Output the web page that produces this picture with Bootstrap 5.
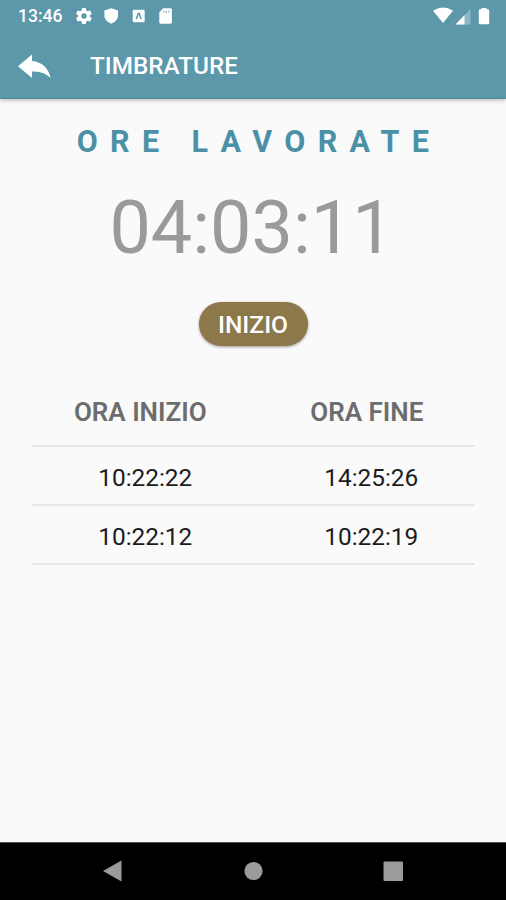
<!DOCTYPE html>
<html lang="it">
<head>
<meta charset="utf-8">
<meta name="viewport" content="width=device-width, initial-scale=1">
<title>Timbrature</title>
<link href="https://cdn.jsdelivr.net/npm/bootstrap@5.3.0/dist/css/bootstrap.min.css" rel="stylesheet">
<style>
body{font-family:Roboto,"Liberation Sans",sans-serif;background:#fafafa;height:900px;overflow:hidden}
svg{display:block;flex:none}
.top-area{background:#5c97aa;height:99px;border-bottom:1px solid #4a8ba0;box-shadow:0 1px 5px rgba(0,0,0,.28)}
.status-bar{height:31px;padding:0 15px 0 18px;font-size:17.5px;font-weight:500;line-height:29px}
.clock{width:58px;padding-top:2px}
.app-bar{height:70px;padding-left:18px}
.app-title{font-size:24.3px;font-weight:500;line-height:70px;margin:0 0 0 39px}
.worked{color:#4a90a6;font-size:30.5px;font-weight:700;letter-spacing:12.35px;line-height:42px;margin:22px 0 0;white-space:nowrap;padding-left:12px}
.timer{color:#9a9a9a;font-size:73.7px;line-height:80px;margin-top:25px;padding-right:3px}
.btn-start{--bs-btn-color:#fff;--bs-btn-bg:#8c784b;--bs-btn-border-width:0;--bs-btn-hover-bg:#7d6a40;--bs-btn-hover-color:#fff;width:109px;height:44px;margin-top:34px;padding:0;font-size:24.6px;font-weight:500;line-height:46px;box-shadow:0 1px 3px rgba(0,0,0,.4)}
.stamps{margin:31px 31px 0 32px;width:auto}
.stamps .row{border-bottom:2px solid #e6e6e6;height:59px;line-height:61px;font-size:24.4px;color:#1c1c1c}
.stamps .row>div{padding:0 0 0 5px}
.stamps .row>div+div{padding:0 0 0 14px}
.stamps .row.heads{height:70px;line-height:71px;font-weight:600;color:#6d6d6d}
.stamps .row.heads>div{padding:0 5px 0 0;font-size:26px}
.stamps .row.heads>div+div{padding:0 0 0 5px}
.nav-keys{height:58px;background:#000;border-top:1px solid #555;padding-bottom:1px}
</style>
</head>
<body class="d-flex flex-column">
<header class="top-area text-white flex-shrink-0">
  <div class="status-bar d-flex align-items-center">
    <span class="clock">13:46</span>
    <svg width="16" height="16" viewBox="2 2 20 20" fill="#fff"><path d="M19.4 13a7.5 7.5 0 0 0 0-2l2.1-1.600a.5.5 0 0 0 .1-.7l-2-3.400a.5.5 0 0 0-.6-.2l-2.500 1a7.300 7.300 0 0 0-1.700-1l-.4-2.600a.5.5 0 0 0-.5-.5h-4a.5.5 0 0 0-.5.5L9 5.100a7.700 7.700 0 0 0-1.700 1l-2.500-1a.5.5 0 0 0-.6.2l-2 3.400a.5.5 0 0 0 .1.7L4.500 11a7.500 7.500 0 0 0 0 2l-2.200 1.600a.5.5 0 0 0-.1.700l2 3.400c.1.200.400.300.600.200l2.500-1a7.300 7.300 0 0 0 1.700 1l.4 2.600c0 .300.200.500.500.500h4c.300 0 .500-.200.500-.500l.4-2.600a7.700 7.700 0 0 0 1.700-1l2.500 1c.200.100.500 0 .600-.200l2-3.400a.5.5 0 0 0-.1-.700zM12 15.400a3.400 3.400 0 1 1 0-6.800 3.400 3.400 0 0 1 0 6.800z"/></svg>
    <svg class="ms-2" width="24" height="16" viewBox="0 0 24 16" fill="#fff"><path d="M11.200.2 18 2.600V7.500c0 3.800-2.900 6.800-6.800 8.200C7.300 14.300 4.400 11.300 4.400 7.500V2.600z"/></svg>
    <svg class="ms-2" width="14" height="14" viewBox="0 0 14 14"><rect x=".7" y=".7" width="12" height="12.500" rx="1.200" fill="#fff"/><path d="M4.300 10 6.300 4.200h.8L9.100 10" fill="none" stroke="#5c97aa" stroke-width="1.500"/></svg>
    <svg class="ms-2" width="24" height="16" viewBox="-6 0 24 16"><path d="M4.500.3H12q1.400 0 1.400 1.400v12.600q0 1.400-1.400 1.400H2.200Q.8 15.700.8 14.300V4.500z" fill="#fff" transform="translate(-1.500)"/><path d="M3.900 2.500v2.500M6.400 2.500v2.500M8.900 2.500v2.500" stroke="#9fc2cd" stroke-width="1.200"/></svg>
    <svg class="ms-auto" width="58" height="18" viewBox="433 6 58 18"><path d="M433 9.800Q443 3.400 453 9.800L443 22z" fill="#fff"/><path d="M470.500 8v15.500h-15z" fill="#8db7c4"/><path d="M464.500 14v9.500h-9z" fill="#fff"/><path d="M481.500 7h5v1.300h1.500q1.200 0 1.200 1.200v12.600q0 1.200-1.200 1.200h-8q-1.200 0-1.200-1.200V9.500q0-1.200 1.200-1.200h1.500z" fill="#fff"/></svg>
  </div>
  <div class="app-bar d-flex align-items-center">
    <svg width="33" height="25" viewBox="0 0 33 25" fill="#fff"><path d="M14 .5V7Q29 8.500 32.700 24 25.500 16.500 14 17.500V24L0 12.200z"/></svg>
    <h1 class="app-title">TIMBRATURE</h1>
  </div>
</header>
<main class="flex-grow-1 d-flex flex-column align-items-center">
  <h2 class="worked">ORE LAVORATE</h2>
  <div class="timer">04:03:11</div>
  <button type="button" class="btn btn-start rounded-pill">INIZIO</button>
  <section class="stamps container-fluid align-self-stretch text-center">
    <div class="row heads"><div class="col-6">ORA INIZIO</div><div class="col-6">ORA FINE</div></div>
    <div class="row"><div class="col-6">10:22:22</div><div class="col-6">14:25:26</div></div>
    <div class="row"><div class="col-6">10:22:12</div><div class="col-6">10:22:19</div></div>
  </section>
</main>
<nav class="nav-keys flex-shrink-0 d-flex align-items-center justify-content-center">
  <svg width="300" height="22" viewBox="103 860 300 22" fill="#9b9b9b"><path d="M103 871 121.500 860.500v21z"/><circle cx="253.500" cy="871" r="9.100"/><rect x="383.500" y="861.500" width="19.500" height="19.500" rx="1"/></svg>
</nav>
<script src="https://cdn.jsdelivr.net/npm/bootstrap@5.3.0/dist/js/bootstrap.bundle.min.js"></script>
</body>
</html>
